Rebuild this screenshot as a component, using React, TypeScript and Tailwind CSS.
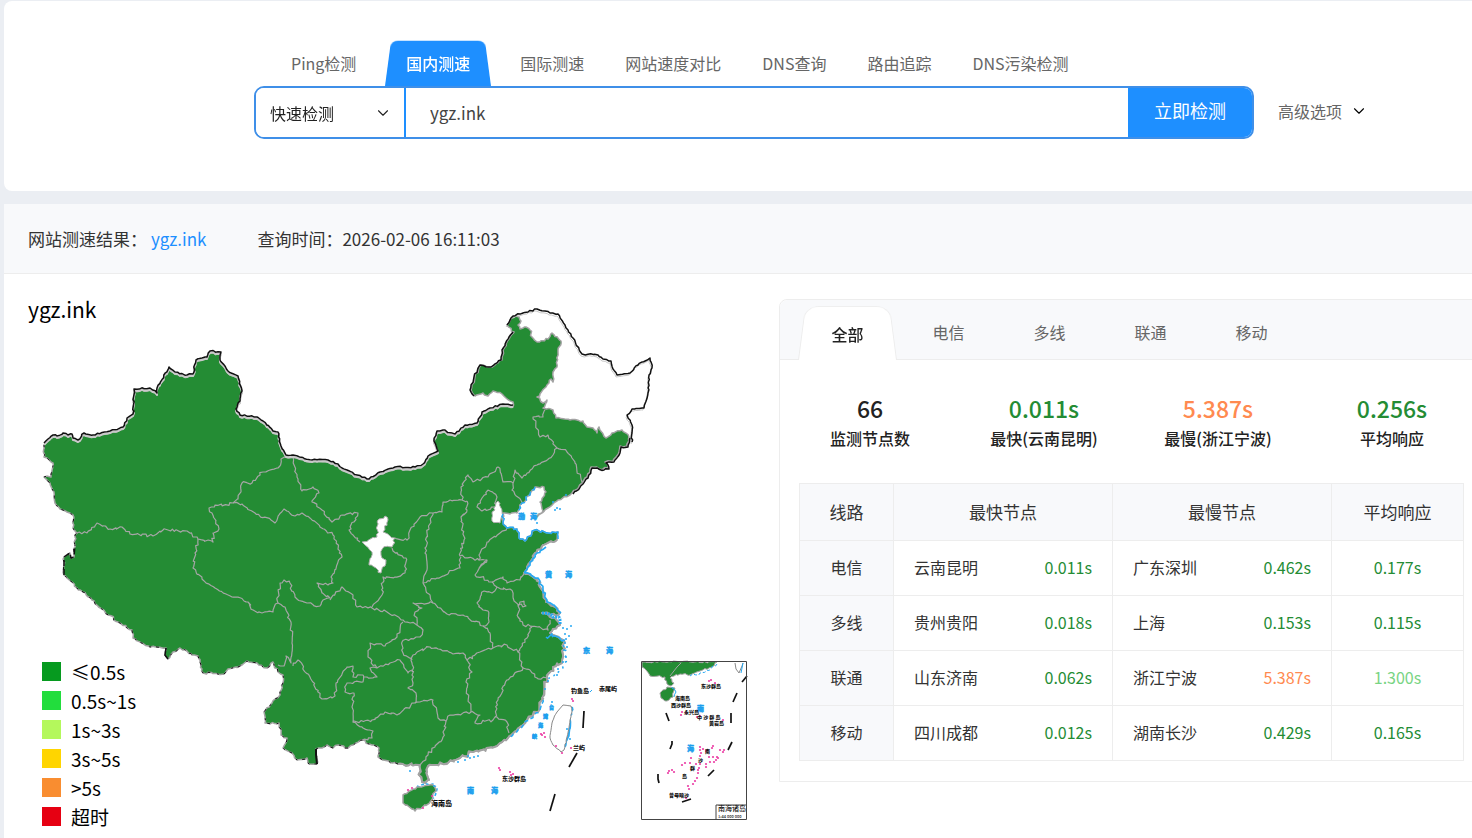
import { ChevronDown } from 'lucide-react';

const tabs = ['Ping检测', '国内测速', '国际测速', '网站速度对比', 'DNS查询', '路由追踪', 'DNS污染检测'];
const carriers = ['全部', '电信', '多线', '联通', '移动'];

const stats = [
  { value: '66', label: '监测节点数', color: 'text-[#222]' },
  { value: '0.011s', label: '最快(云南昆明)', color: 'text-[#248c34]' },
  { value: '5.387s', label: '最慢(浙江宁波)', color: 'text-[#ff8a50]' },
  { value: '0.256s', label: '平均响应', color: 'text-[#248c34]' },
];

const rows = [
  { line: '电信', fast: '云南昆明', fastTime: '0.011s', slow: '广东深圳', slowTime: '0.462s', avg: '0.177s' },
  { line: '多线', fast: '贵州贵阳', fastTime: '0.018s', slow: '上海', slowTime: '0.153s', avg: '0.115s' },
  { line: '联通', fast: '山东济南', fastTime: '0.062s', slow: '浙江宁波', slowTime: '5.387s', avg: '1.300s' },
  { line: '移动', fast: '四川成都', fastTime: '0.012s', slow: '湖南长沙', slowTime: '0.429s', avg: '0.165s' },
];

const legend = [
  { label: '≤0.5s', color: 'bg-[#069a1f]' },
  { label: '0.5s~1s', color: 'bg-[#22dd3d]' },
  { label: '1s~3s', color: 'bg-[#b4f85c]' },
  { label: '3s~5s', color: 'bg-[#ffd500]' },
  { label: '>5s', color: 'bg-[#f98d30]' },
  { label: '超时', color: 'bg-[#e60012]' },
];

const timeColor = (time: string) => {
  const t = parseFloat(time);
  if (t > 5) return 'text-[#ff8a50]';
  if (t > 1) return 'text-[#78d483]';
  return 'text-[#248c34]';
};

// Map geometry, one "x,y" pair per vertex
const north =
  '44,445 48,441 53,437 57,438 63,435 68,437 72,436 73,440 78,442 84,435 93,437 110,433 123,429 127,420 133,416 134,391 150,390 157,395 157,390 169,369 175,374 187,377 193,376 196,362 202,360 207,359 210,353 221,354 220,362 228,373 238,378 242,393 240,403 236,411 240,417 257,419 263,423 273,433 278,434 281,448 286,457 293,457 312,462 328,462 338,466 342,470 357,477 369,481 380,474 395,469 415,469 423,466 428,458 438,453 434,443 437,433 443,432 455,436 465,427 477,425 482,414 490,410 503,406 513,407';
const hulun = '475,396 471,390 475,377 481,365 492,367 502,360 503,350 510,337 514,332';
const heiWest =
  '507,325 513,317 519,317 521,321 518,325 520,329 526,327 530,330 532,337 537,342 548,339 552,333 561,341 558,352 557,367 553,372 553,382 551,379 547,385 537,397 543,403 547,400 543,408 553,410 556,418 570,420 583,421 587,427 593,428 597,433 599,427 606,438 612,433 622,430 629,437';
const heiEast =
  '507,325 513,316 523,313 537,309 550,313 558,314 565,325 573,338 582,354 598,355 603,359 611,361 613,369 617,375 630,373 638,365 650,358 652,368 649,375 648,393 644,408 632,409 627,415 632,425 632,442';
const korea = '629,437 627,446 620,446 619,452 613,461 605,462 608,468 603,469 591,467 587,477 582,483 572,493';
const bohai =
  '570,495 558,500 548,508 537,517 543,511 540,502 546,492 544,487 535,487 530,495 522,503 517,513 510,514 503,513 503,522 507,528 517,529 519,538 525,541 535,530 548,533 558,532';
const yellow =
  '557,540 543,545 535,553 527,567 524,573 537,579 542,590 546,602 553,606 560,613 558,615 542,613 555,618 560,625 550,633 553,635 563,640';
const southCoast =
  '563,640 563,657 562,663 553,667 547,678 542,698 538,712 527,720 517,730 508,738 497,746 473,752 460,758 443,764 428,766 427,772 429,780 422,782 419,775 420,765 412,765 398,764';
const southWest =
  '398,764 383,760 378,757 379,748 372,745 362,740 353,745 345,748 338,745 333,748 327,745 322,748 316,749 317,764 308,763 307,758 297,760 292,753 283,748 287,738 281,735 279,723 265,723 264,712 272,703 280,695 283,683 283,675 278,672 273,662 267,668 257,663 247,661 240,666 228,669 224,674 203,673 200,662 198,656 192,655 180,648 173,652 168,659 165,655 166,648 150,647 133,638 132,630 118,622 105,612 92,600 83,592 77,588 72,582 64,575 64,557 70,553 71,558 74,557 75,537 77,533 73,528 73,515 63,510 55,503 54,492 50,483 44,477 51,477 53,463 47,458 44,457 44,445';
const land = [north, '513,402 502,394 493,391 488,396 483,393', hulun, heiWest, korea, bohai, yellow, southCoast, southWest].join(' ');

const borders = [
  '77,533 87,533 97,523 110,529 122,527 130,534 153,536 163,530 187,531 198,539 213,542 213,533 219,529 212,513 209,508 233,503',
  '233,503 238,499 242,483 252,483 263,472 278,468 281,459 286,457',
  '233,503 242,504 255,513 275,523 284,509 295,516 302,513 320,527 333,535 342,557 331,577 333,583 328,585 317,583 322,593 330,598 323,600 320,606 307,603 295,597 290,583 284,580 280,583 277,600 278,603',
  '293,457 297,477 302,491 313,487 319,493 312,502 322,510 332,522 342,515 358,513 349,530 360,542',
  '392,548 393,551 406,558 405,573 395,577 383,577 382,595 372,607',
  '395,538 407,540 410,530 420,517 433,513 442,512 443,502 462,500 467,501',
  '433,513 427,533 425,553 427,570 423,583 433,603 447,614 463,615 483,626 490,633 493,648',
  '423,583 437,578 460,568 461,557',
  '462,500 461,487 468,475 473,482 488,477 498,467 503,482 513,483 512,490 522,502',
  '467,501 467,510 461,517 464,540 460,556 479,560 479,555 487,542 500,533 507,528',
  '479,560 487,560 475,575 492,582 503,577 507,583 520,580 524,574',
  '479,568 487,560',
  '492,582 497,587 510,589 513,597 518,605 526,606 524,601 520,602 518,617 523,625 538,627 548,630 550,620',
  '532,627 527,638 518,652 523,668 507,680 498,700 495,717',
  '497,587 492,593 484,591 477,603 483,610 488,611 489,622 483,626',
  '523,668 530,670 537,678 547,678',
  '417,652 430,647 453,654 463,653 467,660 480,652 493,648 507,645 518,652',
  '467,660 472,672 466,682 471,712',
  '417,652 413,655 412,663 413,683 408,688 416,693 415,703',
  '415,703 433,700 438,718 446,721 450,715 471,712 480,715 475,723 493,720 495,717 507,722 509,733',
  '446,721 443,737 435,747 428,755 420,765',
  '415,703 397,715 385,712 372,720 353,722 352,707 354,693 345,692 347,683 363,682 363,675 353,677 353,666 347,667 336,683 335,696 322,699 310,677 298,660 293,666',
  '353,722 363,728 373,731 372,738 362,740',
  '363,677 377,677 370,668 377,668 390,663 400,660 408,673 412,670',
  '198,539 195,553 193,568 202,579 215,588 232,597 248,602 253,610 262,613 273,612 278,603',
  '278,603 285,607 291,622 292,643 291,663 286,656 284,666 278,665',
  '330,600 342,587 353,595 357,607 372,608 387,612 403,620 417,625',
  '403,622 397,637 385,646 370,643 368,657 377,668',
  '433,603 413,603 422,608 415,612 417,625 423,630 420,637 402,642 403,653 412,660',
  '488,490 497,497 495,507 482,511 477,507 482,498 488,490',
  '513,483 515,470 522,478 537,465 553,455 557,448 567,452 575,463 582,482',
  '557,448 548,435 540,437 533,417 543,417 545,410',
];

const ningxia =
  '362,542 377,537 378,520 385,516 388,520 383,532 395,538 392,547 383,548 381,555 386,560 385,566 381,573 369,565 372,552 365,545';
const tianjin = '498,501 501,508 503,515 500,523 492,521 492,513 495,510 496,503';
const hainan = '403,795 417,787 433,785 436,790 430,802 415,811 403,803';
const taiwan = '563,705 571,706 572,712 570,720 567,737 564,750 561,752 553,745 550,738 552,723 557,712';

const insetLand = '642,662 717,662 712,667 700,671 690,675 680,674 674,676 670,678 674,683 671,686 667,684 665,677 650,676 646,670 642,667';
const insetHainan = '660,693 667,687 675,688 673,697 667,701 661,698';

const dashes = [
  '584,711 583,728', '577,753 569,767', '555,794 550,811',
  '747,676 742,682', '737,693 733,702', '731,713 731,723', '732,742 728,750',
  '714,770 708,776', '691,799 682,802', '658,774 658,779 659,783', '672,741 672,744 670,749', '666,713 669,721',
];

const seaDots =
  '553,502 557,508 560,509 566,495 555,510 537,523 563,628 567,629 571,626 565,634 569,636 566,639 565,643 567,647 564,650 566,657 563,662 557,675 558,669 548,681 545,689 552,702 458,762 470,758 474,757 478,756 468,756 465,760 410,771 434,786 570,739 567,729';
const reefDots =
  '572,699 573,701 544,733 542,735 545,737 541,734 556,746 562,753 571,748 499,768 500,770 510,772 513,774 511,775 408,790 412,788 432,796 423,808 709,681 711,680 715,683 682,712 686,713 681,715 697,717 700,716 723,720 700,747 700,750 701,753 700,756 703,749 706,751 709,757 713,757 713,746 712,748 720,750 724,750 723,752 718,758 716,760 714,762 710,762 706,764 700,764 696,764 690,763 685,763 682,765 691,758 699,768 698,773 697,778 695,781 693,784 688,786 689,789 669,771 672,770 674,772 668,773 686,798 706,767 698,770 717,757';

const labels = [
  { x: 518, y: 519, size: 7, text: '渤' }, { x: 530, y: 519, size: 7, text: '海' },
  { x: 545, y: 577, size: 7, text: '黄' }, { x: 565, y: 577, size: 7, text: '海' },
  { x: 583, y: 653, size: 7, text: '东' }, { x: 606, y: 653, size: 7, text: '海' },
  { x: 467, y: 793, size: 7, text: '南' }, { x: 491, y: 793, size: 7, text: '海' },
  { x: 549, y: 709, size: 5, text: '台' }, { x: 543, y: 718, size: 5, text: '湾' },
  { x: 538, y: 727, size: 5, text: '海' }, { x: 532, y: 738, size: 5, text: '峡' },
  { x: 697, y: 711, size: 7, text: '南' }, { x: 687, y: 751, size: 7, text: '海' },
];
const islands = [
  { x: 571, y: 693, size: 6, text: '钓鱼岛' }, { x: 599, y: 691, size: 6, text: '赤尾屿' },
  { x: 573, y: 750, size: 6, text: '兰屿' }, { x: 502, y: 781, size: 6, text: '东沙群岛' },
  { x: 431, y: 806, size: 7, text: '海南岛' }, { x: 701, y: 688, size: 5, text: '东沙群岛' },
  { x: 675, y: 700, size: 5, text: '海南岛' }, { x: 671, y: 707, size: 5, text: '西沙群岛' },
  { x: 684, y: 714, size: 5, text: '永兴岛' }, { x: 697, y: 719, size: 5, text: '中 沙 群 岛' },
  { x: 709, y: 725, size: 5, text: '黄岩岛' }, { x: 705, y: 753, size: 5, text: '南' },
  { x: 698, y: 762, size: 5, text: '沙' }, { x: 690, y: 770, size: 5, text: '群' },
  { x: 682, y: 778, size: 5, text: '岛' }, { x: 669, y: 797, size: 5, text: '曾母暗沙' },
];

const toPairs = (s: string) => s.split(' ').map((p) => p.split(',').map(Number));

// Breaks long straight runs into short ones so that borders look surveyed
function rough(s: string, amp = 1.4) {
  const pts = toPairs(s);
  const out = [s.split(' ')[0]];
  for (let i = 1; i < pts.length; i++) {
    const [ax, ay] = pts[i - 1];
    const [bx, by] = pts[i];
    const n = Math.max(1, Math.round(Math.hypot(bx - ax, by - ay) / 2.5));
    for (let k = 1; k < n; k++) {
      const seed = Math.sin(ax * 12.9 + ay * 78.2 + k * 37.7) * 43758.5;
      const seed2 = Math.sin(ay * 15.1 + bx * 54.3 + k * 21.3) * 24634.6;
      const dx = (seed - Math.floor(seed) - 0.5) * 2 * amp;
      const dy = (seed2 - Math.floor(seed2) - 0.5) * 2 * amp;
      out.push(`${(ax + ((bx - ax) * k) / n + dx).toFixed(1)},${(ay + ((by - ay) * k) / n + dy).toFixed(1)}`);
    }
    out.push(`${bx},${by}`);
  }
  return out.join(' ');
}

function ChinaMap() {
  return (
    <svg viewBox="28 299 724 532" className="block w-full" fill="none" strokeLinejoin="round" role="img" aria-label="ygz.ink">
      <polygon points={rough(land, 1)} fill="#248c34" stroke="#a3a3a3" strokeWidth="1.5" />
      <polyline points={rough(southCoast, 2)} stroke="#a3a3a3" strokeWidth="2" />
      <polyline points={rough(yellow)} stroke="#a3a3a3" strokeWidth="2" />
      {borders.map((b, i) => (
        <polyline key={i} points={rough(b)} stroke="#a6a6a6" strokeWidth="1.2" />
      ))}
      <polygon points={rough(ningxia)} fill="#fff" stroke="#b0b0b0" />
      <polygon points={rough(tianjin)} fill="#fff" stroke="#b0b0b0" />
      <g stroke="#c9c9c9">
        <polyline points={rough(north, 0.8)} strokeWidth="2" />
        <polyline points={rough(heiEast, 0.8)} transform="translate(-1 2)" />
      </g>
      <g stroke="#111" strokeWidth="1.5">
        <polyline points={rough(north, 0.8)} transform="translate(0 -2)" />
        <polyline points={rough(hulun, 0.8)} transform="translate(-1 0)" />
        <polyline points={rough(heiEast, 0.8)} />
        <polyline points={rough(korea, 0.8)} transform="translate(1 1)" />
        <polyline points={rough(southWest, 1)} strokeWidth="1" strokeDasharray="3 5 2 7" />
        <polyline points="64,575 64,557 70,553 71,558 74,557 75,545" strokeDasharray="6 3" />
        <polyline points="316,749 316,755 317,764" strokeWidth="2" />
        <polyline points="166,648 165,655 168,659" />
        {dashes.map((d) => (
          <polyline key={d} points={d} strokeWidth="1.7" />
        ))}
      </g>
      <g stroke="#27a9f3" strokeWidth="1.5">
        <polyline points={rough('535,487 530,495 522,503 518,511')} strokeDasharray="5 2" />
        <polyline points={rough('503,514 503,522 507,528 517,529 519,538 525,541 535,530 548,533 558,532 558,539')} />
        <polyline points={rough('546,547 537,553 528,567 525,573 538,578 543,589 547,602 554,605 561,613')} strokeWidth="1.7" />
        <polyline points={rough('542,613 552,615 559,617 560,625')} strokeWidth="3" strokeDasharray="2 1" />
        <polyline points={rough('546,637 552,635 560,639 565,640', 2)} />
        <polyline points={rough('543,700 540,710 530,719 518,730 510,737')} strokeDasharray="4 3" />
        <polyline points={rough('572,707 570,720 568,737 563,748')} strokeWidth="2" />
        <polyline points={rough('417,786 433,784 437,789 431,799')} strokeDasharray="3 2" />
        <polyline points={rough('563,640 566,655 563,668 549,679', 2)} strokeDasharray="2 5" />
      </g>
      <polygon points={rough(hainan)} fill="#248c34" stroke="#a3a3a3" strokeWidth="1.5" />
      <polygon points={rough(taiwan, 0.5)} fill="#fff" stroke="#888" />

      {/* South China Sea inset */}
      <polygon points={rough(insetLand, 1)} fill="#248c34" stroke="#a3a3a3" />
      <polyline points="681,663 677,667 670,676" stroke="#a3a3a3" />
      <polygon points={rough(insetHainan, 1)} fill="#248c34" stroke="#a3a3a3" />
      <polyline points={rough('672,687 676,692 674,697')} stroke="#27a9f3" />
      <polyline points={rough('717,664 711,669 700,673 690,676')} stroke="#27a9f3" strokeDasharray="3 2" />
      <polyline points="735,663 736,669 739,673 742,666 743,663" stroke="#888" />
      <polyline points="743,663 741,673" stroke="#27a9f3" />
      <polyline points="716,819 716,805 747,805" stroke="#444" />
      <rect x="641.5" y="661.5" width="105" height="158" stroke="#444" />

      {toPairs(seaDots).map(([x, y], i) => (
        <circle key={i} cx={x} cy={y} r="1" fill="#27a9f3" />
      ))}
      {toPairs(reefDots).map(([x, y], i) => (
        <circle key={i} cx={x} cy={y} r="1.1" fill="#ec3fa5" />
      ))}
      <polyline points="590,692 592,690" stroke="#27a9f3" />
      {labels.map((l, i) => (
        <text key={i} x={l.x} y={l.y} fontSize={l.size} fontWeight="900" fill="#1b9fee" stroke="#1b9fee" strokeWidth="0.5">
          {l.text}
        </text>
      ))}
      {islands.map((l, i) => (
        <text key={i} x={l.x} y={l.y} fontSize={l.size} fontWeight="900" fill="#111">
          {l.text}
        </text>
      ))}
      <text x="718" y="811" fontSize="7" fontWeight="500" fill="#111">南海诸岛</text>
      <text x="718" y="818" fontSize="4" fontWeight="500" fill="#111">1:44 000 000</text>
    </svg>
  );
}

function SearchCard() {
  return (
    <section className="mt-px rounded-l-lg bg-white pt-10 pb-[52px] pl-[250px]">
      <nav className="flex gap-px pl-[17px]">
        {tabs.map((tab, i) =>
          i === 1 ? (
            <button
              key={tab}
              className="relative isolate mx-2 h-[45px] px-[21px] pb-0.5 font-medium text-white before:absolute before:inset-x-0 before:bottom-0 before:-z-10 before:h-[52px] before:origin-bottom before:rounded-t-lg before:bg-[#1e8fff] before:[transform:perspective(70px)_rotateX(10deg)]"
            >
              {tab}
            </button>
          ) : (
            <button key={tab} className="h-[45px] px-5 pb-0.5 text-[#666]">
              {tab}
            </button>
          ),
        )}
      </nav>
      <div className="flex items-center">
        <form className="flex h-[53px] w-[1000px] overflow-hidden rounded-[10px] border-2 border-[#3f8fe8]">
          <div className="relative flex w-[150px] shrink-0 items-center border-r-2 border-[#1e8fff]">
            <select
              aria-label="检测方式"
              className="h-full w-full appearance-none bg-white pl-[14px] text-[#222] outline-none"
            >
              <option>快速检测</option>
            </select>
            <ChevronDown className="pointer-events-none absolute right-3 h-[18px] w-[18px] text-[#222]" strokeWidth={1.5} />
          </div>
          <input
            aria-label="网址"
            defaultValue="ygz.ink"
            className="min-w-0 flex-1 px-6 text-[17px] text-[#444] outline-none"
          />
          <button type="button" className="w-[124px] shrink-0 bg-[#1e8fff] pb-1 text-[18px] text-white">
            立即检测
          </button>
        </form>
        <button className="ml-6 flex items-center gap-2 pb-1 text-[#666]">
          高级选项
          <ChevronDown className="h-[18px] w-[18px] text-black" strokeWidth={1.5} />
        </button>
      </div>
    </section>
  );
}

function ResultPanel() {
  return (
    <section className="-mr-[13px] min-w-0 flex-1 self-start rounded-t-lg border border-[#ededed]">
      <nav className="flex h-[60px] rounded-t-lg border-b border-[#ededed] bg-[#f8f9fb] pt-1 pl-[17px]">
        {carriers.map((name, i) =>
          i === 0 ? (
            <button
              key={name}
              className="relative isolate w-[101px] pt-1 font-medium text-[#222] before:absolute before:inset-x-px before:-bottom-px before:-z-10 before:h-16 before:origin-bottom before:rounded-t-2xl before:border before:border-b-0 before:border-[#ededed] before:bg-white before:[transform:perspective(66px)_rotateX(10deg)]"
            >
              {name}
            </button>
          ) : (
            <button key={name} className="w-[101px] text-[#666]">
              {name}
            </button>
          ),
        )}
      </nav>
      <div className="grid grid-cols-4 pt-[31px] pr-[5px] pb-[33px] pl-[3px] text-center font-medium">
        {stats.map((s) => (
          <div key={s.label}>
            <div className={`text-[23px] leading-[35px] ${s.color}`}>{s.value}</div>
            <div className="leading-6 text-[#222]">{s.label}</div>
          </div>
        ))}
      </div>
      <div className="pr-5 pb-5 pl-[19px]">
        <table className="w-full table-fixed border-collapse text-[#333] [&_td]:border [&_td]:border-[#ededed] [&_td]:pb-0.5 [&_th]:border [&_th]:border-[#ededed] [&_th]:font-normal">
          <colgroup>
            <col className="w-[94px]" />
            <col />
            <col />
            <col className="w-[132px]" />
          </colgroup>
          <thead>
            <tr className="h-[57px] bg-[#f8f9fb] text-[17px]">
              <th>线路</th>
              <th>最快节点</th>
              <th>最慢节点</th>
              <th>平均响应</th>
            </tr>
          </thead>
          <tbody>
            {rows.map((r) => (
              <tr key={r.line} className="h-[55px]">
                <td className="bg-[#f8f9fb] text-center">{r.line}</td>
                <td className="px-5">
                  <div className="flex justify-between">
                    <span>{r.fast}</span>
                    <span className={timeColor(r.fastTime)}>{r.fastTime}</span>
                  </div>
                </td>
                <td className="px-5">
                  <div className="flex justify-between">
                    <span>{r.slow}</span>
                    <span className={timeColor(r.slowTime)}>{r.slowTime}</span>
                  </div>
                </td>
                <td className={`text-center ${timeColor(r.avg)}`}>{r.avg}</td>
              </tr>
            ))}
          </tbody>
        </table>
      </div>
    </section>
  );
}

export default function App() {
  return (
    <div className="flex min-h-screen flex-col overflow-hidden bg-[#ebeef3] pl-1 font-['Noto_Sans_CJK_SC',sans-serif] text-base">
      <SearchCard />
      <section className="mt-[13px] flex-1 bg-white">
        <header className="flex h-[70px] items-center gap-[51px] border-b border-[#ededed] bg-[#f8f9fb] px-6 text-[17px] text-[#333]">
          <div>
            网站测速结果：
            <a href="#" className="ml-1 text-[#1e8fff]">
              ygz.ink
            </a>
          </div>
          <div>查询时间：2026-02-06 16:11:03</div>
        </header>
        <div className="flex gap-[27px] pt-[25px] pl-6">
          <div className="relative w-[724px] shrink-0">
            <ChinaMap />
            <h2 className="absolute top-0 left-0 text-[21px] leading-5 text-black">ygz.ink</h2>
            <ul className="absolute bottom-0 left-[14px] text-[19px] leading-[29px] text-black">
              {legend.map((l) => (
                <li key={l.label} className="flex items-center gap-[10px]">
                  <span className={`h-[19px] w-[19px] ${l.color}`}></span>
                  {l.label}
                </li>
              ))}
            </ul>
          </div>
          <ResultPanel />
        </div>
      </section>
    </div>
  );
}
